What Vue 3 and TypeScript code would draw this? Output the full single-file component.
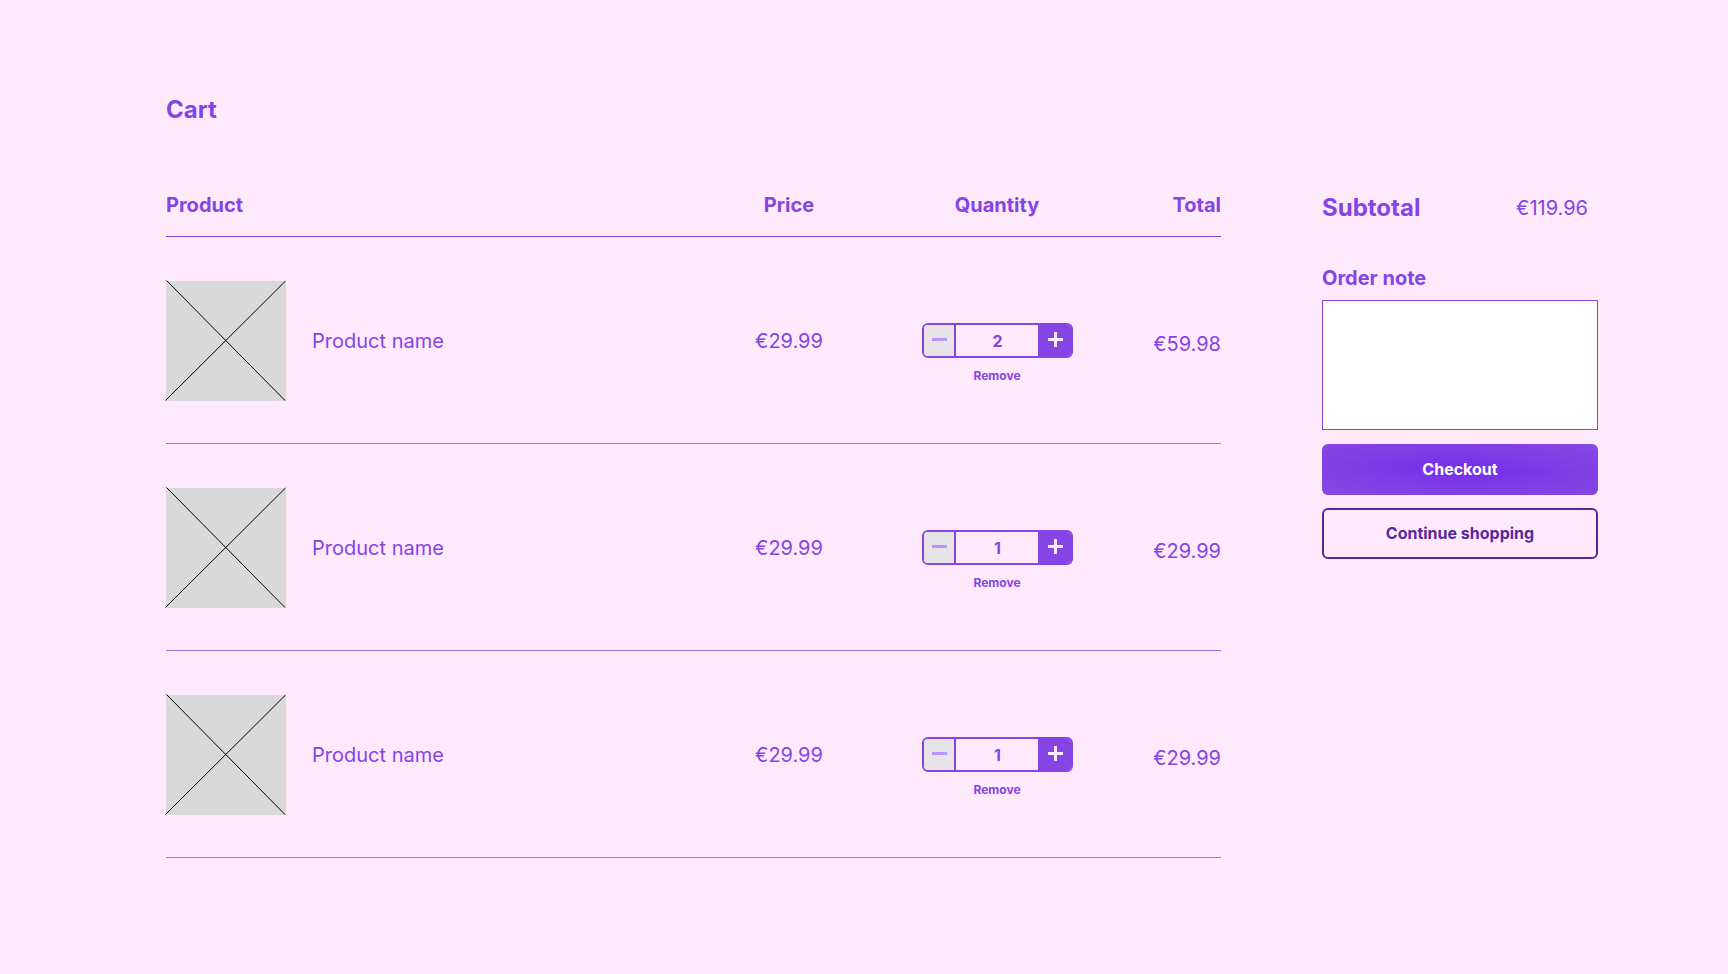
<script setup lang="ts">
import { computed, ref } from 'vue'

interface CartItem {
  id: number
  name: string
  cents: number
  quantity: number
}

const items = ref<CartItem[]>([
  { id: 1, name: 'Product name', cents: 2999, quantity: 2 },
  { id: 2, name: 'Product name', cents: 2999, quantity: 1 },
  { id: 3, name: 'Product name', cents: 2999, quantity: 1 },
])
const note = ref('')

const subtotal = computed(() => items.value.reduce((sum, item) => sum + item.cents * item.quantity, 0))

function euro(cents: number): string {
  return `€${(cents / 100).toFixed(2)}`
}

function change(item: CartItem, step: number): void {
  item.quantity = Math.max(1, item.quantity + step)
}

function remove(id: number): void {
  items.value = items.value.filter((item) => item.id !== id)
}
</script>

<template>
  <main class="page">
    <h1 class="title">Cart</h1>
    <div class="layout">
      <table class="cart">
        <thead>
          <tr>
            <th class="col-product" scope="col">Product</th>
            <th class="col-price" scope="col">Price</th>
            <th class="col-quantity" scope="col">Quantity</th>
            <th class="col-total" scope="col">Total</th>
          </tr>
        </thead>
        <tbody>
          <tr v-for="item in items" :key="item.id">
            <td class="col-product">
              <div class="product">
                <svg class="thumb" viewBox="0 0 120 120" aria-hidden="true">
                  <rect width="120" height="120" fill="#d9d9d9" />
                  <path d="M0.5 -0.5L119 119.5M119.5 0L-0.5 119.5" stroke="#000" fill="none" />
                </svg>
                <span>{{ item.name }}</span>
              </div>
            </td>
            <td class="col-price">{{ euro(item.cents) }}</td>
            <td class="col-quantity">
              <div class="quantity">
                <div class="stepper">
                  <button class="step minus" type="button" aria-label="Decrease quantity" @click="change(item, -1)">
                    <svg viewBox="0 0 15 15" aria-hidden="true"><path d="M0 7.5H15" /></svg>
                  </button>
                  <input v-model.number="item.quantity" class="count" type="text" inputmode="numeric" aria-label="Quantity" />
                  <button class="step plus" type="button" aria-label="Increase quantity" @click="change(item, 1)">
                    <svg viewBox="0 0 15 15" aria-hidden="true"><path d="M0 7.5H15M7.5 0V15" /></svg>
                  </button>
                </div>
                <button class="remove" type="button" @click="remove(item.id)">Remove</button>
              </div>
            </td>
            <td class="col-total"><div class="amount">{{ euro(item.cents * item.quantity) }}</div></td>
          </tr>
        </tbody>
      </table>

      <aside class="summary">
        <div class="subtotal">
          <h2>Subtotal</h2>
          <span>{{ euro(subtotal) }}</span>
        </div>
        <label class="note-label" for="order-note">Order note</label>
        <textarea id="order-note" v-model="note" class="note"></textarea>
        <button class="action checkout" type="button">Checkout</button>
        <button class="action continue" type="button">Continue shopping</button>
      </aside>
    </div>
  </main>
</template>

<style>
body {
  margin: 0;
  background: #ffe9fd;
}
</style>

<style scoped>
.page {
  box-sizing: border-box;
  min-height: 100vh;
  padding: 94px 130px 64px 166px;
  background: #ffe9fd;
  color: #8445e4;
  font-family: Inter, "Liberation Sans", sans-serif;
  font-size: 20px;
  font-weight: 400;
  line-height: 24px;
}

button,
input,
textarea {
  margin: 0;
  padding: 0;
  border: 0;
  font-family: inherit;
  color: inherit;
}

button {
  cursor: pointer;
}

.title,
.subtotal h2 {
  margin: 0;
  font-size: 24px;
  font-weight: 700;
  line-height: 32px;
}

.layout {
  display: grid;
  grid-template-columns: minmax(0, 1fr) 276px;
  gap: 101px;
  align-items: start;
  margin-top: 66px;
}

.cart {
  width: 100%;
  table-layout: fixed;
  border-collapse: separate;
  border-spacing: 0;
}

.cart th,
.cart td {
  padding: 0;
  border-bottom: 1px solid #8445e4;
  text-align: center;
  vertical-align: middle;
}

.cart th {
  padding: 1px 0 19px;
  font-weight: 700;
}

.cart td {
  padding: 44px 0 42px;
}

.cart tbody td {
  border-bottom-color: #a36fec;
}

.cart .col-product {
  text-align: left;
}

.cart .col-price {
  width: 130px;
}

.cart .col-quantity {
  width: 286px;
}

.cart .col-total {
  width: 81px;
  text-align: right;
}

.product {
  display: flex;
  align-items: center;
  gap: 26px;
}

.thumb {
  flex: none;
  width: 120px;
  height: 120px;
  overflow: visible;
}

.quantity {
  display: flex;
  flex-direction: column;
  align-items: center;
  gap: 10px;
  padding-top: 25px;
}

.stepper {
  display: flex;
  box-sizing: border-box;
  width: 151px;
  height: 35px;
  border: 2px solid #8445e4;
  border-radius: 6px;
  overflow: hidden;
}

.step {
  flex: none;
  display: flex;
  justify-content: flex-start;
  padding-top: 7px;
}

.step svg {
  width: 15px;
  height: 15px;
  fill: none;
  stroke: currentColor;
  stroke-width: 3;
}

.minus {
  width: 30px;
  padding-left: 8px;
  background: #e6e4e6;
  color: #bb93fa;
}

.plus {
  width: 33px;
  padding-left: 10px;
  background: #8445e4;
  color: #ffe9fd;
}

.count {
  flex: 1;
  min-width: 0;
  padding-left: 2px;
  border-left: 2px solid #8445e4;
  background: transparent;
  font-size: 16px;
  font-weight: 700;
  text-align: center;
}

.remove {
  background: none;
  font-size: 12px;
  font-weight: 700;
  line-height: 16px;
}

.amount {
  padding-top: 6px;
}

.summary {
  display: flex;
  flex-direction: column;
}

.subtotal {
  display: flex;
  align-items: center;
  justify-content: space-between;
  padding-right: 10px;
}

.note-label {
  margin-top: 42px;
  font-weight: 700;
}

.note {
  display: block;
  box-sizing: border-box;
  height: 130px;
  margin-top: 10px;
  padding: 8px;
  border: 1px solid #8445e4;
  border-radius: 0;
  background: #fff;
  font-size: 16px;
  resize: none;
}

.action {
  box-sizing: border-box;
  height: 51px;
  padding-bottom: 1px;
  border-radius: 6px;
  font-size: 16px;
  font-weight: 700;
}

.checkout {
  margin-top: 14px;
  background:
    linear-gradient(182deg, rgb(138 77 226 / 60%), rgb(138 77 226 / 0%) 50%, rgb(138 77 226 / 60%)),
    radial-gradient(ellipse 75% 200% at center, #752ce9 0%, #8648e2 100%);
  color: #fff;
}

.continue {
  margin-top: 13px;
  border: 2px solid #55289f;
  background: transparent;
  color: #55289f;
}
</style>
